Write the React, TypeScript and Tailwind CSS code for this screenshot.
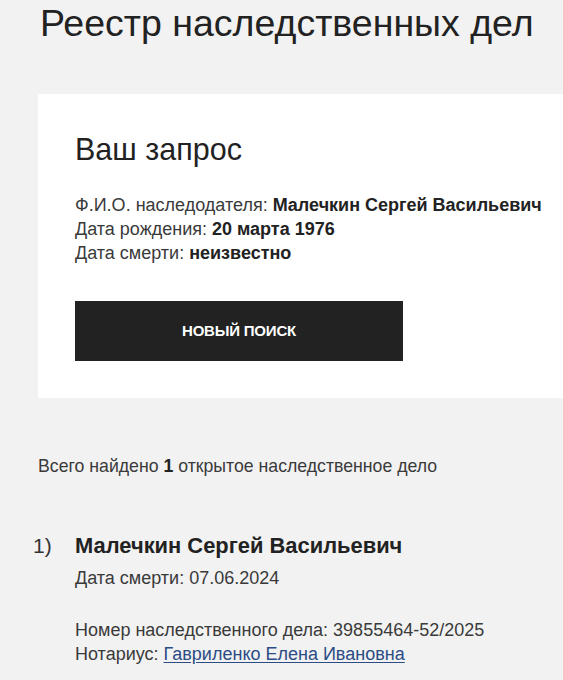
export default function App() {
  return (
    <div className="min-h-[680px] bg-[#f2f2f2] text-[#222] font-['Liberation_Sans',Arial,sans-serif] overflow-hidden">
      <h1 className="pl-[40px] pt-[1px] text-[37.5px] leading-[44px] whitespace-nowrap">Реестр наследственных дел</h1>

      <div className="ml-[38px] mt-[49px] bg-white pl-[37px] pt-[37px] pb-[37px] h-[304px]">
        <h2 className="text-[30.5px] leading-[36px]">Ваш запрос</h2>
        <div className="mt-[26px] text-[18px] leading-[24px] text-[#3a3a3a] whitespace-nowrap">
          <p>Ф.И.О. наследодателя: <b className="text-[#222]">Малечкин Сергей Васильевич</b></p>
          <p>Дата рождения: <b className="text-[#222]">20 марта 1976</b></p>
          <p>Дата смерти: <b className="text-[#222]">неизвестно</b></p>
        </div>
        <button className="mt-[36px] w-[328px] h-[60px] bg-[#222] text-white text-[15px] font-bold tracking-[-0.2px]">
          НОВЫЙ ПОИСК
        </button>
      </div>

      <p className="pl-[38px] mt-[56px] text-[17.7px] leading-[24px] text-[#3a3a3a]">
        Всего найдено <b className="text-[#222]">1</b> открытое наследственное дело
      </p>

      <div className="flex mt-[54px] pl-[33px]">
        <span className="w-[42px] text-[21px] leading-[28px] text-[#333]">1)</span>
        <div>
          <h3 className="text-[21.9px] leading-[28px] font-bold">Малечкин Сергей Васильевич</h3>
          <p className="mt-[6px] text-[18px] leading-[24px] text-[#3a3a3a]">Дата смерти: 07.06.2024</p>
          <div className="mt-[28px] text-[18px] leading-[24px] text-[#3a3a3a] whitespace-nowrap">
            <p>Номер наследственного дела: 39855464-52/2025</p>
            <p>
              Нотариус: <a href="#" className="text-[#2b4c85] underline underline-offset-2">Гавриленко Елена Ивановна</a>
            </p>
          </div>
        </div>
      </div>
    </div>
  );
}
